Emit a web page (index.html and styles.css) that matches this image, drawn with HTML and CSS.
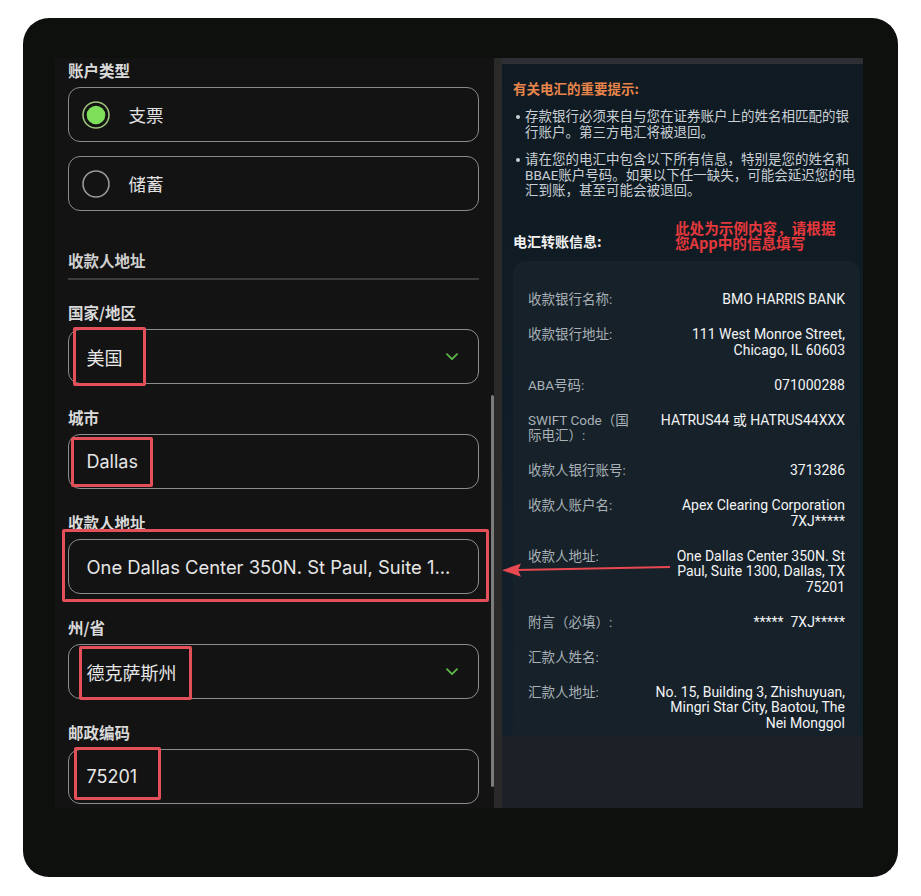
FILE: index.html
```html
<!DOCTYPE html>
<html lang="zh-CN">
<head>
<meta charset="utf-8">
<title>电汇信息</title>
<link rel="stylesheet" href="styles.css">
</head>
<body>
<div class="frame">
  <section class="form-panel">
    <h4 class="label">账户类型</h4>
    <div class="radio-list">
      <div class="radio-box">
        <svg class="radio" width="28" height="28" viewBox="0 0 28 28"><circle cx="14" cy="14" r="13" fill="none" stroke="#9cc07c" stroke-width="1.6"/><circle cx="14" cy="14" r="9.3" fill="#7edf5b"/></svg>
        <span class="radio-text">支票</span>
      </div>
      <div class="radio-box">
        <svg class="radio" width="28" height="28" viewBox="0 0 28 28"><circle cx="14" cy="14" r="13" fill="none" stroke="#9a9a9a" stroke-width="1.6"/></svg>
        <span class="radio-text">储蓄</span>
      </div>
    </div>

    <h4 class="section-title">收款人地址</h4>
    <div class="divider"></div>

    <div class="field">
      <h4 class="label">国家/地区</h4>
      <div class="input select">
        <span>美国</span>
        <svg class="chev" width="12" height="8" viewBox="0 0 12 8"><path d="M1 1.2 L6 6.2 L11 1.2" fill="none" stroke="#5db84a" stroke-width="1.8" stroke-linecap="round" stroke-linejoin="round"/></svg>
        <i class="mark mark-country"></i>
      </div>
    </div>

    <div class="field">
      <h4 class="label">城市</h4>
      <div class="input">
        <span>Dallas</span>
        <i class="mark mark-city"></i>
      </div>
    </div>

    <div class="field">
      <h4 class="label">收款人地址</h4>
      <div class="input">
        <span class="addr">One Dallas Center 350N. St Paul, Suite 1...</span>
        <i class="mark mark-address"></i>
      </div>
    </div>

    <div class="field">
      <h4 class="label">州/省</h4>
      <div class="input select">
        <span>德克萨斯州</span>
        <svg class="chev" width="12" height="8" viewBox="0 0 12 8"><path d="M1 1.2 L6 6.2 L11 1.2" fill="none" stroke="#5db84a" stroke-width="1.8" stroke-linecap="round" stroke-linejoin="round"/></svg>
        <i class="mark mark-state"></i>
      </div>
    </div>

    <div class="field">
      <h4 class="label">邮政编码</h4>
      <div class="input">
        <span>75201</span>
        <i class="mark mark-zip"></i>
      </div>
    </div>

    <div class="scroll-thumb"></div>
  </section>

  <section class="notice">
    <div class="notice-top"></div>
    <div class="notice-body">
      <h3 class="tip-title">有关电汇的重要提示:</h3>
      <ul class="tips">
        <li><span>存款银行必须来自与您在证券账户上的姓名相匹配的银<br>行账户。第三方电汇将被退回。</span></li>
        <li><span>请在您的电汇中包含以下所有信息，特别是您的姓名和<br>BBAE账户号码。如果以下任一缺失，可能会延迟您的电<br>汇到账，甚至可能会被退回。</span></li>
      </ul>
      <div class="info-head">
        <span class="info-title">电汇转账信息:</span>
        <span class="sample-note"><span class="note-line">此处为示例内容，请根据</span><span class="note-line">您App中的信息填写</span></span>
      </div>
      <div class="info-card">
        <div class="row"><span class="k">收款银行名称:</span><span class="v">BMO HARRIS BANK</span></div>
        <div class="row"><span class="k">收款银行地址:</span><span class="v">111 West Monroe Street,<br>Chicago, IL 60603</span></div>
        <div class="row"><span class="k">ABA号码:</span><span class="v">071000288</span></div>
        <div class="row"><span class="k">SWIFT Code（国<br>际电汇）:</span><span class="v">HATRUS44 或 HATRUS44XXX</span></div>
        <div class="row"><span class="k">收款人银行账号:</span><span class="v">3713286</span></div>
        <div class="row"><span class="k">收款人账户名:</span><span class="v">Apex Clearing Corporation<br>7XJ*****</span></div>
        <div class="row"><span class="k">收款人地址:</span><span class="v">One Dallas Center 350N. St<br>Paul, Suite 1300, Dallas, TX<br>75201</span></div>
        <div class="row"><span class="k">附言（必填）:</span><span class="v">*****&nbsp;&nbsp;7XJ*****</span></div>
        <div class="row"><span class="k">汇款人姓名:</span><span class="v"></span></div>
        <div class="row"><span class="k">汇款人地址:</span><span class="v">No. 15, Building 3, Zhishuyuan,<br>Mingri Star City, Baotou, The<br>Nei Monggol</span></div>
      </div>
    </div>
    <div class="notice-foot"></div>
  </section>

  <svg class="arrow" width="200" height="30" viewBox="0 0 200 30">
    <path d="M195 12 L42 15" fill="none" stroke="#e8484f" stroke-width="2"/>
    <path d="M27 15.2 L46 8.5 L43 15 L46 21.8 Z" fill="#e8484f"/>
  </svg>
</div>
</body>
</html>
```

FILE: styles.css
```css
* { box-sizing: border-box; }

html, body {
  margin: 0;
  padding: 0;
  background: #ffffff;
}

body {
  width: 921px;
  height: 896px;
  overflow: hidden;
  font-family: Inter, "Noto Sans CJK SC", sans-serif;
}

.frame {
  position: relative;
  margin: 18px 0 0 23px;
  width: 875px;
  height: 859px;
  border-radius: 26px;
  background: #0e100d;
  padding: 40px 0 0 32px;
  display: flex;
  align-items: flex-start;
}

/* ---------- left form panel ---------- */
.form-panel {
  position: relative;
  width: 439px;
  height: 750px;
  background: #131313;
  padding: 2px 15px 0 13px;
  overflow: hidden;
  flex: none;
}

.label {
  margin: 0 0 7px;
  font-family: "Noto Sans CJK SC", sans-serif;
  font-size: 15.5px;
  line-height: 20px;
  font-weight: 700;
  color: #d9d9d9;
}

.radio-list {
  display: flex;
  flex-direction: column;
  gap: 14px;
}

.radio-box {
  height: 55px;
  border: 1.5px solid #8a8a8a;
  border-radius: 12px;
  display: flex;
  align-items: center;
  padding-left: 12.5px;
  gap: 19px;
}

.radio { flex: none; display: block; }

.radio-text {
  font-family: "Noto Sans CJK SC", sans-serif;
  font-size: 17.5px;
  color: #e2e2e2;
}

.section-title {
  margin: 39px 0 0;
  font-family: "Noto Sans CJK SC", sans-serif;
  font-size: 15.5px;
  line-height: 20px;
  font-weight: 700;
  color: #cfcfcf;
}

.divider {
  margin-top: 8px;
  height: 2px;
  background: #3d3d3d;
}

.field { margin-top: 22px; }
.field + .field { margin-top: 23px; }

.input {
  position: relative;
  height: 55px;
  border: 1.5px solid #8c8c8c;
  border-radius: 12px;
  display: flex;
  align-items: center;
  padding: 0 20px 0 17.5px;
  font-size: 18px;
  color: #e6e6e6;
  white-space: nowrap;
}

.addr { font-size: 18.4px; }

.select { justify-content: space-between; }

.chev { display: block; flex: none; }

.mark {
  position: absolute;
  border: 3px solid #e4505a;
  border-radius: 2px;
  pointer-events: none;
}

.mark-country { left: 3.5px; top: -3.5px; width: 73px; height: 59px; }
.mark-city    { left: 1.5px; top: 1.5px;  width: 82px; height: 50px; }
.mark-address { left: -7.5px; top: -11.5px; width: 427px; height: 73px; }
.mark-state   { left: 9.5px; top: 0.5px;  width: 113px; height: 54px; }
.mark-zip     { left: 4.5px; top: -3.5px; width: 87px; height: 53px; }

.scroll-thumb {
  position: absolute;
  right: 0;
  top: 337px;
  width: 3px;
  height: 392px;
  border-radius: 2px;
  background: #7b7b7b;
}

/* ---------- right notice panel ---------- */
.notice {
  width: 369px;
  height: 750px;
  border-left: 8px solid #2a2a2b;
  display: flex;
  flex-direction: column;
  flex: none;
  font-family: Roboto, "Noto Sans CJK SC", sans-serif;
}

.notice-top {
  height: 6px;
  background: #2c2f33;
  flex: none;
}

.notice-body {
  flex: 1;
  background: linear-gradient(#0f1a22, #13202a);
  padding: 15px 3px 0 11px;
  overflow: hidden;
  display: flex;
  flex-direction: column;
}

.tip-title {
  margin: 0;
  font-family: "Noto Sans CJK SC", sans-serif;
  font-size: 13.5px;
  line-height: 18px;
  font-weight: 700;
  color: #e8854b;
}

.tips {
  list-style: none;
  margin: 12px 0 0;
  padding: 0;
}

.tips li {
  display: flex;
  gap: 5px;
  font-size: 13.5px;
  line-height: 15.6px;
  color: #c9d0d5;
  white-space: nowrap;
}

.tips li + li { margin-top: 12px; }

.tips li::before {
  content: "";
  flex: none;
  width: 4px;
  height: 4px;
  margin: 6px 0 0 3px;
  border-radius: 50%;
  background: #c9d0d5;
}

.info-head {
  margin-top: 21px;
  display: flex;
  align-items: flex-end;
}

.info-title {
  width: 162px;
  flex: none;
  font-family: "Noto Sans CJK SC", sans-serif;
  font-size: 14px;
  line-height: 15.5px;
  font-weight: 700;
  color: #f2f2f2;
}

.sample-note {
  display: flex;
  flex-direction: column;
  font-family: "Noto Sans CJK SC", sans-serif;
  font-size: 14.6px;
  font-weight: 700;
  color: #e4383c;
  white-space: nowrap;
}

.note-line {
  display: block;
  height: 15px;
  line-height: 15px;
}

.info-card {
  flex: 1;
  margin-top: 11px;
  background: #172129;
  border-radius: 12px 12px 0 0;
  padding: 31px 15px 0 15px;
}

.row {
  display: flex;
  justify-content: space-between;
  font-size: 13.5px;
  line-height: 15.6px;
  margin-bottom: 19.4px;
}

.k {
  width: 112px;
  flex: none;
  color: #a7b1b7;
  white-space: nowrap;
}

.v {
  text-align: right;
  white-space: nowrap;
  font-size: 14px;
  font-weight: 400;
  color: #f2f4f6;
}

.notice-foot {
  height: 72px;
  flex: none;
  background: #1e2028;
}

.arrow {
  position: absolute;
  left: 452px;
  top: 537px;
  display: block;
  z-index: 2;
}
```
